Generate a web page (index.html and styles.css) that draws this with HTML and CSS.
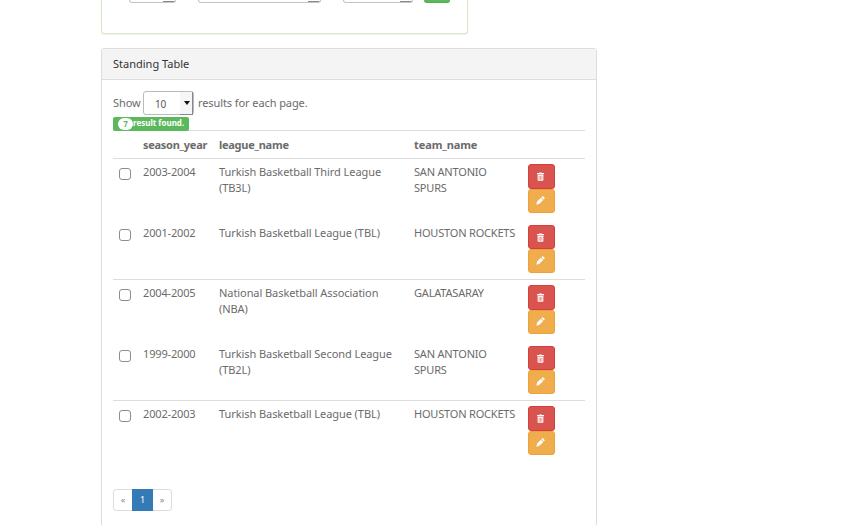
FILE: index.html
```html
<!DOCTYPE html>
<html lang="en">
<head>
<meta charset="utf-8">
<title>Standing Table</title>
<link rel="stylesheet" href="styles.css">
</head>
<body>
<svg class="defs" aria-hidden="true">
  <symbol id="trash" viewBox="0 0 8 10"><path fill-rule="evenodd" d="M2.5 1V0.3h3V1H8v1.4H0V1zM.7 2.9h6.6v6.3l-.6.6H1.3l-.6-.6zM2 4v4.7h.7V4zm1.7 0v4.7h.6V4zm1.6 0v4.7H6V4z"/></symbol>
  <symbol id="pencil" viewBox="0 0 10 10"><path d="M.4 9.6l.8-3.5L5.4 1.9l2.6 2.6-4.2 4.2zM6 1.3l.8-.8q.6-.5 1.2 0l1.4 1.4q.5.6 0 1.2l-.8.8z"/></symbol>
</svg>
<section class="panel filter">
  <select class="control c1"></select><select class="control c2"></select><select class="control c3"></select><button class="submit" aria-label="Submit"></button>
</section>
<section class="panel standing">
  <header class="heading">Standing Table</header>
  <div class="content">
    <div class="length"><span class="show">Show</span><span class="select"><span class="value">10</span><span class="drop"></span></span><span class="each">results for each page.</span></div>
    <div class="found"><span class="count">7</span><span class="ftext">result found.</span></div>
    <table>
      <colgroup><col class="w1"><col class="w2"><col class="w3"><col class="w4"><col class="w5"></colgroup>
      <thead><tr><th></th><th>season_year</th><th>league_name</th><th>team_name</th><th></th></tr></thead>
      <tbody>
        <tr class="line odd"><td><input type="checkbox"></td><td class="year">2003-2004</td><td class="league">Turkish Basketball Third League<br>(TB3L)</td><td class="team">SAN ANTONIO<br>SPURS</td><td><button class="btn del"><svg class="t"><use href="#trash"/></svg></button><button class="btn edit"><svg class="p"><use href="#pencil"/></svg></button></td></tr>
        <tr class="even"><td><input type="checkbox"></td><td class="year">2001-2002</td><td class="league">Turkish Basketball League (TBL)</td><td class="team">HOUSTON ROCKETS</td><td><button class="btn del"><svg class="t"><use href="#trash"/></svg></button><button class="btn edit"><svg class="p"><use href="#pencil"/></svg></button></td></tr>
        <tr class="line odd"><td><input type="checkbox"></td><td class="year">2004-2005</td><td class="league">National Basketball Association<br>(NBA)</td><td class="team">GALATASARAY</td><td><button class="btn del"><svg class="t"><use href="#trash"/></svg></button><button class="btn edit"><svg class="p"><use href="#pencil"/></svg></button></td></tr>
        <tr class="even"><td><input type="checkbox"></td><td class="year">1999-2000</td><td class="league">Turkish Basketball Second League<br>(TB2L)</td><td class="team">SAN ANTONIO<br>SPURS</td><td><button class="btn del"><svg class="t"><use href="#trash"/></svg></button><button class="btn edit"><svg class="p"><use href="#pencil"/></svg></button></td></tr>
        <tr class="line odd"><td><input type="checkbox"></td><td class="year">2002-2003</td><td class="league">Turkish Basketball League (TBL)</td><td class="team">HOUSTON ROCKETS</td><td><button class="btn del"><svg class="t"><use href="#trash"/></svg></button><button class="btn edit"><svg class="p"><use href="#pencil"/></svg></button></td></tr>
      </tbody>
    </table>
    <nav class="pages"><span class="prev">«</span><span class="current">1</span><span class="next">»</span></nav>
  </div>
</section>
</body>
</html>
```
FILE: styles.css
```css
* { box-sizing: border-box; }
body { margin: 0; height: 525px; overflow: hidden; background: #fff; color: #6b6b6b; font: 11px/16px "Noto Sans", sans-serif; }
.defs { display: none; }
.panel { margin-left: 101px; border: 1px solid #ddd; border-radius: 3px; box-shadow: 0 1px 1px rgba(0,0,0,.05); background: #fff; }
.filter { display: flex; align-items: flex-start; width: 367px; height: 34px; padding-left: 27px; border-top: 0; border-radius: 0 0 3px 3px; border-color: #d6e9c6; }
.control { appearance: none; height: 3px; margin: 0; padding: 0; border: 1px solid #c4c4c4; border-top: 0; border-radius: 0 0 3px 3px; background: linear-gradient(#888, #888) right bottom / 12px 1px no-repeat #fff; }
.c1 { width: 47px; }
.c2 { width: 123px; margin-left: 22px; }
.c3 { width: 70px; margin-left: 22px; }
.submit { width: 26px; height: 3px; margin: 0 0 0 11px; padding: 0; border: 0; border-bottom: 1px solid #4cae4c; border-radius: 0 0 3px 3px; background: #5cb85c; }
.standing { width: 496px; height: 500px; margin-top: 14px; }
.heading { height: 31px; padding: 7px 11px; border-bottom: 1px solid #ddd; background: #f4f4f4; color: #333; }
.content { padding: 11px; }
.length { display: flex; align-items: center; height: 24px; letter-spacing: -.09px; }
.show { width: 30px; }
.select { display: flex; width: 51px; height: 24px; border: 1px solid #bbb; border-radius: 3px; margin-right: 4px; font-size: 10px; line-height: 24px; color: #555; }
.value { width: 37px; padding-left: 11px; letter-spacing: -.3px; }
.drop { width: 13px; height: 23px; border-right: 1px solid #888; border-bottom: 1px solid #888; background: #f6f6f6; flex: none; }
.drop::before { content: ""; display: block; margin: 9px 0 0 4px; width: 0; border: 3px solid transparent; border-top: 4px solid #111; border-bottom: 0; }
.found { display: flex; width: 76px; height: 14px; margin-top: 2px; padding-left: 5px; border-radius: 2px; background: #5cb85c; color: #fff; font-size: 8px; font-weight: 700; line-height: 12px; white-space: nowrap; position: relative; }
.count { width: 15px; height: 12px; margin-top: 1px; border-radius: 6px; background: #fff; color: #5cb85c; text-align: center; line-height: 12px; }
table { width: 472px; margin-top: -1px; border-collapse: separate; border-spacing: 0; table-layout: fixed; }
.w1 { width: 25px; } .w2 { width: 76px; } .w3 { width: 195px; } .w4 { width: 114px; } .w5 { width: 62px; }
th, td { padding: 5px 0 0 5px; border-top: 1px solid transparent; text-align: left; vertical-align: top; white-space: nowrap; }
th { height: 28px; padding-top: 6px; border-color: #ddd; font-weight: 700; letter-spacing: -.27px; }
th:nth-child(4) { letter-spacing: -.1px; }
.year { letter-spacing: -.16px; }
.league { letter-spacing: -.07px; }
.team { letter-spacing: -.19px; }
.line td { border-color: #ddd; }
.odd { height: 61px; }
.even { height: 60px; }
input { appearance: none; display: block; width: 12px; height: 12px; margin: 4px 0 0 1px; border: 1px solid #8d8d8d; border-radius: 3px; background: #fff; }
.btn { display: flex; align-items: center; justify-content: center; width: 27px; height: 24px; margin: 0; padding: 0 2px 1px 0; border: 1px solid #eea236; border-radius: 3px; background: #f0ad4e; color: #fff; }
.del { border-color: #d43f3a; background: #d9534f; padding-bottom: 0; }
.odd .del { height: 25px; }
svg { display: block; fill: #fff; }
.t { width: 7px; height: 9px; }
.p { width: 9px; height: 9px; }
.pages { display: flex; width: 59px; height: 22px; margin-top: 28px; border: 1px solid #ddd; border-radius: 3px; font-size: 9px; line-height: 19px; text-align: center; color: #888; }
.prev { width: 18px; }
.current { width: 21px; height: 22px; margin-top: -1px; background: #337ab7; color: #fff; line-height: 22px; }
.next { width: 18px; }
```
